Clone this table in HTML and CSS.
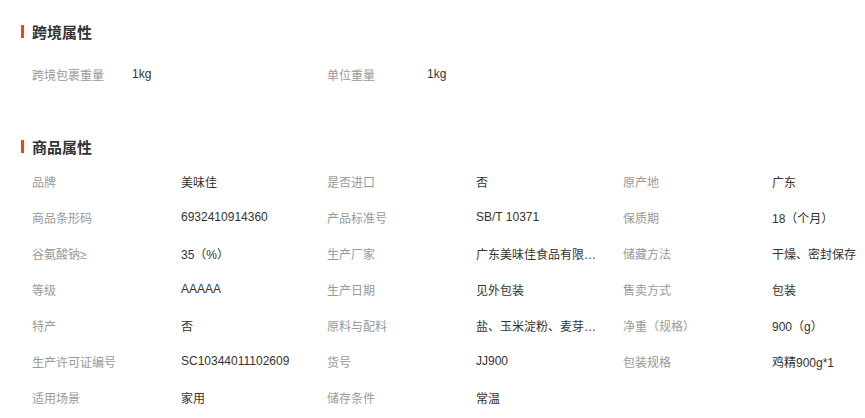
FILE: index.html
```html
<!DOCTYPE html>
<html lang="zh-CN">
<head>
    <meta charset="UTF-8">
    <title>商品属性</title>
    <link rel="stylesheet" href="styles.css">
</head>
<body>
    <section class="block">
        <h2 class="block-title">跨境属性</h2>
        <ul class="attrs attrs-short">
            <li><span class="name">跨境包裹重量</span><span class="value">1kg</span></li>
            <li><span class="name">单位重量</span><span class="value">1kg</span></li>
        </ul>
    </section>
    <section class="block block-goods">
        <h2 class="block-title">商品属性</h2>
        <ul class="attrs">
            <li><span class="name">品牌</span><span class="value">美味佳</span></li>
            <li><span class="name">是否进口</span><span class="value">否</span></li>
            <li><span class="name">原产地</span><span class="value">广东</span></li>
            <li><span class="name">商品条形码</span><span class="value">6932410914360</span></li>
            <li><span class="name">产品标准号</span><span class="value">SB/T 10371</span></li>
            <li><span class="name">保质期</span><span class="value">18（个月）</span></li>
            <li><span class="name">谷氨酸钠≥</span><span class="value">35（%）</span></li>
            <li><span class="name">生产厂家</span><span class="value">广东美味佳食品有限公司</span></li>
            <li><span class="name">储藏方法</span><span class="value">干燥、密封保存</span></li>
            <li><span class="name">等级</span><span class="value">AAAAA</span></li>
            <li><span class="name">生产日期</span><span class="value">见外包装</span></li>
            <li><span class="name">售卖方式</span><span class="value">包装</span></li>
            <li><span class="name">特产</span><span class="value">否</span></li>
            <li><span class="name">原料与配料</span><span class="value">盐、玉米淀粉、麦芽糊精、鸡肉粉</span></li>
            <li><span class="name">净重（规格）</span><span class="value">900（g）</span></li>
            <li><span class="name">生产许可证编号</span><span class="value">SC10344011102609</span></li>
            <li><span class="name">货号</span><span class="value">JJ900</span></li>
            <li><span class="name">包装规格</span><span class="value">鸡精900g*1</span></li>
            <li><span class="name">适用场景</span><span class="value">家用</span></li>
            <li><span class="name">储存条件</span><span class="value">常温</span></li>
        </ul>
    </section>
</body>
</html>
```

FILE: styles.css
```css
*{
    box-sizing: border-box;
    margin: 0;
    padding: 0;
}
body{
    background-color: white;
    color: #333;
    font-family: "Liberation Sans", "Noto Sans CJK SC", sans-serif;
    font-size: 12px;
    overflow: hidden;
}
.block{
    padding-top: 21px;
}
.block-goods{
    padding-top: 44px;
}
.block-title{
    display: flex;
    align-items: center;
    gap: 8px;
    height: 20px;
    padding-left: 21px;
    font-size: 15px;
    font-weight: bold;
    color: #333;
}
.block-title::before{
    content: "";
    width: 3px;
    height: 13px;
    background-color: #ff4000;
}
.attrs{
    list-style: none;
    display: grid;
    grid-template-columns: 295px 296px 1fr;
    padding-left: 32px;
    margin-top: 7px;
}
.attrs li{
    display: flex;
    align-items: center;
    height: 36px;
    white-space: nowrap;
}
.name{
    flex: 0 0 149px;
    color: #999;
}
.value{
    max-width: 126px;
    overflow: hidden;
    text-overflow: ellipsis;
    color: #333;
}
.attrs-short{
    margin-top: 15px;
}
.attrs-short .name{
    flex-basis: 100px;
}
```
